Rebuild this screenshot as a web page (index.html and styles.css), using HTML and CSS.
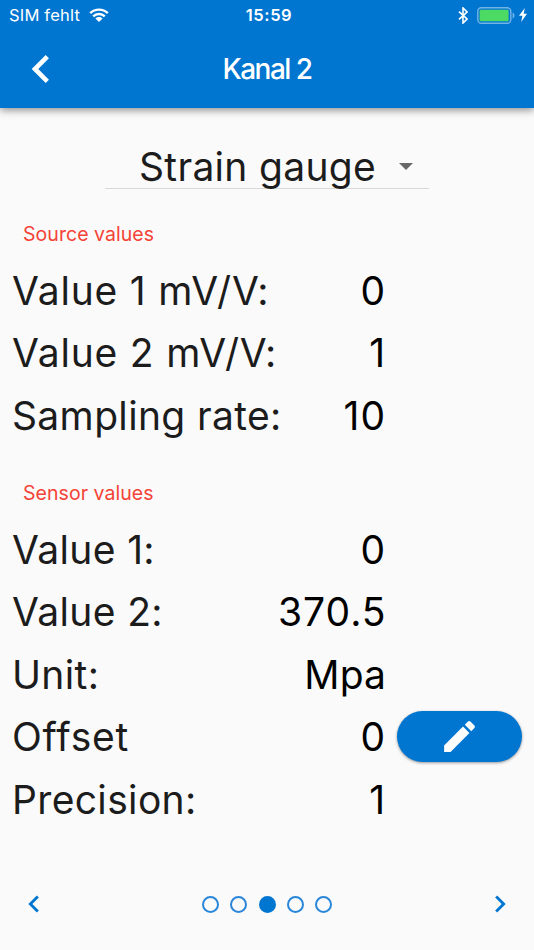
FILE: index.html
```
<!DOCTYPE html>
<html lang="en">
  <head>
    <meta charset="utf-8" />
    <meta name="viewport" content="width=device-width, initial-scale=1" />
    <title>Kanal 2</title>
    <link rel="stylesheet" href="styles.css">
  </head>
  <body>
    <header>
      <div class="status">
        <div class="carrier">
          <span>SIM fehlt</span>
          <svg class="wifi" viewBox="0 0 20 14">
            <path d="M1.2 5.2a12.6 12.6 0 0 1 17.6 0M4.2 8.4a8.3 8.3 0 0 1 11.6 0" />
            <path class="fill" d="M10 14L6.4 10.5a5.2 5.2 0 0 1 7.2 0z" />
          </svg>
        </div>
        <span class="time">15:59</span>
        <div class="power">
          <svg class="bluetooth" viewBox="0 0 10 17">
            <path d="M1 4.6l8 7.4-4 4V1l4 4-8 7.4" />
          </svg>
          <svg class="battery" viewBox="0 0 38 17">
            <rect class="case" x=".8" y=".8" width="33" height="15.4" rx="3.5" />
            <rect class="charge" x="2.6" y="2.8" width="29" height="11.4" rx="1.2" />
            <path class="cap" d="M35.6 5.6c2.5 1 2.5 4.8 0 5.8z" />
          </svg>
          <svg class="bolt" viewBox="0 0 8 14">
            <path d="M5.8 0L0 7.8h3.4L2.2 14 8 5.8H4.7z" />
          </svg>
        </div>
      </div>
      <div class="title-bar">
        <svg class="back" viewBox="0 0 24 24">
          <path d="M15.41 7.41L14 6l-6 6 6 6 1.41-1.41L10.83 12z" />
        </svg>
        <h1>Kanal 2</h1>
      </div>
    </header>
    <main>
      <div class="select">
        <span>Strain gauge</span>
        <svg viewBox="0 0 14 7"><path d="M0 0h14L7 7z" /></svg>
      </div>
      <section>
        <h2>Source values</h2>
        <div class="row"><span class="label wide">Value 1 mV/V:</span><span class="value">0</span></div>
        <div class="row"><span class="label wide">Value 2 mV/V:</span><span class="value">1</span></div>
        <div class="row"><span class="label">Sampling rate:</span><span class="value">10</span></div>
      </section>
      <section>
        <h2>Sensor values</h2>
        <div class="row"><span class="label">Value 1:</span><span class="value">0</span></div>
        <div class="row"><span class="label">Value 2:</span><span class="value">370.5</span></div>
        <div class="row"><span class="label">Unit:</span><span class="value unit">Mpa</span></div>
        <div class="row">
          <span class="label wide">Offset</span><span class="value">0</span>
          <button type="button" aria-label="Edit">
            <svg viewBox="0 0 24 24">
              <path d="M3 17.25V21h3.75L17.81 9.94l-3.75-3.75L3 17.25zM20.71 7.04a1 1 0 0 0 0-1.41l-2.34-2.34a1 1 0 0 0-1.41 0l-1.83 1.83 3.75 3.75 1.83-1.83z" />
            </svg>
          </button>
        </div>
        <div class="row"><span class="label">Precision:</span><span class="value">1</span></div>
      </section>
    </main>
    <footer>
      <svg viewBox="0 0 24 24"><path d="M15.41 7.41L14 6l-6 6 6 6 1.41-1.41L10.83 12z" /></svg>
      <div class="dots">
        <i></i><i></i><i class="active"></i><i></i><i></i>
      </div>
      <svg viewBox="0 0 24 24"><path d="M10 6L8.59 7.41 13.17 12l-4.58 4.59L10 18l6-6z" /></svg>
    </footer>
  </body>
</html>
```
FILE: styles.css
```
:root {
  --blue: #0076d1;
}

* {
  box-sizing: border-box;
}

body {
  margin: 0;
  height: 950px;
  display: flex;
  flex-direction: column;
  background-color: #fafafa;
  color: #1c1c1c;
  font-family: Inter, Roboto, sans-serif;
  overflow: hidden;
}

svg {
  display: block;
  flex: none;
}

header {
  flex: 0 0 108px;
  background-color: var(--blue);
  color: white;
  box-shadow: 0 2px 8px rgba(0, 0, 0, 0.45);
}

.status {
  display: grid;
  grid-template-columns: 1fr auto 1fr;
  align-items: center;
  height: 30px;
  padding: 0 7px 0 9px;
  font-size: 16.5px;
}

.carrier {
  display: flex;
  align-items: center;
  gap: 9px;
  letter-spacing: 0.2px;
}

.wifi {
  width: 20px;
  height: 14px;
  fill: none;
  stroke: white;
  stroke-width: 2.4;
}

.wifi .fill {
  fill: white;
  stroke: none;
}

.time {
  margin-left: 2px;
  font-weight: 600;
  letter-spacing: 0.6px;
}

.power {
  display: flex;
  align-items: center;
  justify-content: flex-end;
}

.bluetooth {
  width: 10px;
  height: 17px;
  margin-right: 9px;
  fill: none;
  stroke: white;
  stroke-width: 1.6;
}

.battery {
  width: 38px;
  height: 17px;
  margin-right: 4px;
}

.case {
  fill: none;
  stroke: #73b4e6;
  stroke-width: 1.4;
}

.charge {
  fill: #4cd964;
}

.cap {
  fill: #73b4e6;
}

.bolt {
  width: 8px;
  height: 14px;
  fill: white;
}

.title-bar {
  display: grid;
  grid-template-columns: 1fr auto 1fr;
  align-items: center;
  height: 78px;
  padding: 0 13px;
}

.back {
  width: 56px;
  height: 56px;
  fill: white;
}

h1 {
  margin: 0;
  font-size: 28px;
  font-weight: 500;
  letter-spacing: -1.5px;
}

.select {
  display: flex;
  align-items: center;
  justify-content: flex-end;
  width: 324px;
  height: 44px;
  margin: 37px 0 0 105px;
  padding-right: 16px;
  border-bottom: 1.5px solid #d8d8d8;
  font-size: 39px;
  letter-spacing: 0.3px;
}

.select svg {
  width: 14px;
  height: 7px;
  margin-left: 23px;
  fill: #686868;
}

h2 {
  margin: 0;
  height: 70px;
  padding: 33px 0 0 23px;
  color: #f44336;
  font-size: 19.5px;
  font-weight: 400;
  line-height: 24px;
  letter-spacing: 0.05px;
}

section + section h2 {
  height: 71px;
  padding-top: 34px;
}

.row {
  display: flex;
  align-items: center;
  height: 62.6px;
  padding: 0 11px 0 12px;
  font-size: 39px;
  letter-spacing: 0.35px;
  white-space: nowrap;
}

.label {
  flex: 0 0 266px;
  min-width: 0;
}

.wide {
  letter-spacing: 0.8px;
}

.value {
  flex: 0 0 108px;
  min-width: 0;
  color: #000;
  text-align: right;
  letter-spacing: 1px;
}

.unit {
  letter-spacing: 0.1px;
}

button {
  display: flex;
  align-items: center;
  justify-content: center;
  width: 125px;
  height: 51px;
  margin-left: 11px;
  padding: 0;
  border: 0;
  border-radius: 26px;
  background-color: var(--blue);
  box-shadow: 0 1px 3px rgba(0, 0, 0, 0.4);
}

button svg {
  width: 41px;
  height: 41px;
  fill: white;
}

footer {
  display: flex;
  align-items: center;
  justify-content: space-between;
  height: 34px;
  margin: auto 17px 29px;
}

footer svg {
  width: 34px;
  height: 34px;
  fill: var(--blue);
}

.dots {
  display: flex;
  gap: 11.4px;
}

.dots i {
  width: 17px;
  height: 17px;
  border: 2px solid #2a86d8;
  border-radius: 50%;
}

.dots .active {
  border-color: var(--blue);
  background-color: var(--blue);
}
```
